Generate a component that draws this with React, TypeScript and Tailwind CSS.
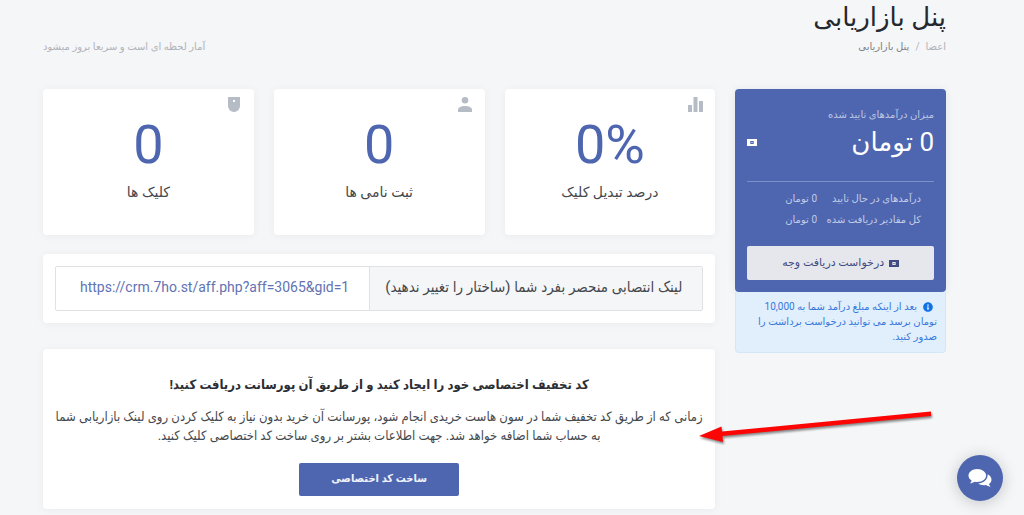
import type { ReactNode } from 'react';
import { FaInfoCircle } from 'react-icons/fa';

interface StatCardProps {
  value: string;
  label: string;
  icon: ReactNode;
}

function BarsIcon() {
  return (
    <svg viewBox="0 0 15 15" className="w-[15px] h-[15px]" fill="currentColor">
      <path d="M0 8h4v7H0zM5.5 0h4v15h-4zM11 4h4v11h-4z" />
    </svg>
  );
}

function PersonIcon() {
  return (
    <svg viewBox="0 0 14 15" className="w-[14px] h-[15px]" fill="currentColor">
      <circle cx="7" cy="3.3" r="3.3" />
      <path d="M0 15v-2.2C0 10.2 3.5 9 7 9s7 1.2 7 3.8V15z" />
    </svg>
  );
}

function MouseIcon() {
  return (
    <svg viewBox="0 0 12 15" className="w-[12px] h-[15px]" fill="currentColor">
      <path fillRule="evenodd" d="M0 0h12v9a6 6 0 0 1-12 0zM5 3v2h2V3z" />
    </svg>
  );
}

function CashIcon() {
  return (
    <svg viewBox="0 0 10 7" className="w-[10px] h-[7px]" fill="currentColor">
      <path fillRule="evenodd" d="M0 0h10v7H0zM3.3 2v3h3.4V2z" />
      <path d="M4.5 3h1v1h-1z" />
    </svg>
  );
}

function ChatIcon() {
  return (
    <svg viewBox="0 0 24 20" className="w-[24px] h-[20px]" fill="currentColor">
      <path d="M9.300 1C4.400 1 .5 3.900.5 7.600c0 2.100 1.200 3.900 3.200 5.100-.4 1-1 1.900-1.900 2.600 1.900-.1 3.500-.8 4.700-1.600.9.300 1.800.4 2.800.4 4.900 0 8.800-2.900 8.800-6.500S14.200 1 9.300 1z" />
      <path d="M19.600 6.200c.6 4.700-3.700 8.800-9.400 9.400 1.500 1 3.400 1.600 5.400 1.600.8 0 1.600-.1 2.300-.3 1.200.9 2.800 1.500 4.700 1.500-.8-.6-1.400-1.400-1.700-2.300 1.600-1.100 2.600-2.600 2.600-4.400 0-2.300-1.500-4.400-3.900-5.500z" />
    </svg>
  );
}

function StatCard({ value, label, icon }: StatCardProps) {
  return (
    <div className="relative bg-white rounded shadow-[0_1px_8px_rgba(0,0,0,0.05)] h-[146px] pt-7 text-center">
      <span className="absolute top-2 right-3 flex w-[15px] justify-center text-[#b6bcc6]">{icon}</span>
      <div dir="ltr" className="text-[54px] leading-[56px] text-[#4e66b0]">{value}</div>
      <div className="mt-2 text-[14px] leading-[22px] text-[#45484d]">{label}</div>
    </div>
  );
}

const stats: StatCardProps[] = [
  { value: '0%', label: 'درصد تبدیل کلیک', icon: <BarsIcon /> },
  { value: '0', label: 'ثبت نامی ها', icon: <PersonIcon /> },
  { value: '0', label: 'کلیک ها', icon: <MouseIcon /> },
];

const totals = [
  { label: 'درآمدهای در حال تایید', value: '0 تومان' },
  { label: 'کل مقادیر دریافت شده', value: '0 تومان' },
];

function EarningsPanel() {
  return (
    <aside>
      <div className="bg-[#4e66b0] rounded shadow-[0_1px_8px_rgba(0,0,0,0.08)] px-3 pt-[17px] pb-3">
        <div className="text-[10px] leading-[18px] text-[#bcc6e3]">میزان درآمدهای تایید شده</div>
        <div className="flex items-center justify-between text-white">
          <span className="text-[26px] leading-9">0 تومان</span>
          <CashIcon />
        </div>
        <div className="mt-[21px] border-t border-[#7e90c8] pt-[6px] pr-[13px]">
          {totals.map(total => (
            <div key={total.label} className="flex text-[10px] leading-[21px] text-[#c3cce7]">
              <span className="w-[95px] whitespace-nowrap">{total.label}</span>
              <span className="mr-[9px]">{total.value}</span>
            </div>
          ))}
        </div>
        <button className="mt-4 w-full h-[34px] flex items-center justify-center gap-[5px] rounded-xs bg-[#e6e7ec] text-[11px] text-[#3f4b80]">
          <CashIcon />
          درخواست دریافت وجه
        </button>
      </div>
      <div className="rounded-b border border-t-0 border-[#d5e6f9] bg-[#e1eefc] pt-[7px] pr-2 pb-2 text-[10px] leading-[15px] text-[#3579db] whitespace-nowrap">
        <div className="flex items-center gap-[6px] pr-1">
          <FaInfoCircle className="text-[#1273e6]" />
          <span>بعد از اینکه مبلغ درآمد شما به 10,000</span>
        </div>
        <div>تومان برسد می توانید درخواست برداشت را</div>
        <div>صدور کنید.</div>
      </div>
    </aside>
  );
}

export default function App() {
  return (
    <div
      dir="rtl"
      className="relative min-h-screen overflow-hidden bg-[#f5f6f8] pl-[43px] pr-[78px] pb-[6px] font-['Roboto','DejaVu_Sans',sans-serif]"
    >
      <header>
        <h1 className="mb-1 text-[26px] leading-[34px] text-[#24282f]">پنل بازاریابی</h1>
        <div className="flex items-center justify-between text-[10px] leading-[18px] text-[#b0b3b8]">
          <nav className="flex gap-[6px]">
            <a href="#members">اعضا</a>
            <span>/</span>
            <span className="text-[#7d8086]">پنل بازاریابی</span>
          </nav>
          <span>آمار لحظه ای است و سریعا بروز میشود</span>
        </div>
      </header>

      <div className="mt-[33px] grid grid-cols-4 gap-5 items-start">
        <EarningsPanel />

        <main className="col-span-3">
          <div className="grid grid-cols-3 gap-5">
            {stats.map(stat => (
              <StatCard key={stat.label} {...stat} />
            ))}
          </div>

          {/* Referral link */}
          <div className="mt-[19px] bg-white rounded shadow-[0_1px_8px_rgba(0,0,0,0.05)] p-3">
            <div className="flex h-[45px] border border-[#dfe1e5] rounded-xs">
              <label
                htmlFor="referral"
                className="flex items-center w-[333px] pr-5 pb-[3px] bg-[#f5f6f8] border-l border-[#dfe1e5] text-[15px] text-[#45484d] whitespace-nowrap font-['Roboto','DejaVu_Sans_Condensed','DejaVu_Sans',sans-serif]"
              >
                لینک انتصابی منحصر بفرد شما (ساختار را تغییر ندهید)
              </label>
              <input
                id="referral"
                dir="ltr"
                readOnly
                value="https://crm.7ho.st/aff.php?aff=3065&gid=1"
                className="min-w-0 flex-1 px-5 pb-[3px] text-right text-sm text-[#6273b3] outline-none"
              />
            </div>
          </div>

          {/* Discount code */}
          <section className="mt-[26px] h-[160px] bg-white rounded shadow-[0_1px_8px_rgba(0,0,0,0.05)] pt-6 text-center font-['Roboto','DejaVu_Sans_Condensed','DejaVu_Sans',sans-serif]">
            <h2 className="text-[13px] leading-6 font-bold text-[#2b2e34]">
              کد تخفیف اختصاصی خود را ایجاد کنید و از طریق آن پورسانت دریافت کنید!
            </h2>
            <p className="mt-[10px] text-[13px] leading-[19px] text-[#45484d] whitespace-nowrap">
              زمانی که از طریق کد تخفیف شما در سون هاست خریدی انجام شود، پورسانت آن خرید بدون نیاز به کلیک کردن روی لینک بازاریابی شما
              <br />
              به حساب شما اضافه خواهد شد. جهت اطلاعات بشتر بر روی ساخت کد اختصاصی کلیک کنید.
            </p>
            <button className="mt-[18px] w-[160px] h-[33px] rounded-xs bg-[#4e66b0] text-[11px] font-bold text-[#f0f2f9]">
              ساخت کد اختصاصی
            </button>
          </section>
        </main>
      </div>

      {/* Pointer arrow */}
      <svg
        viewBox="0 0 240 36"
        className="absolute right-[87px] top-[407px] w-[240px] h-[36px] drop-shadow-[1px_2px_1px_rgba(0,0,0,0.45)]"
        fill="#fb0505"
      >
        <path d="M234 4.500v4.500L25.500 29l.5 6L2 29l22.500-9.500.5 5z" />
      </svg>

      <button
        aria-label="گفتگو"
        className="absolute right-[21px] bottom-[14px] w-[46px] h-[46px] flex items-center justify-center rounded-full bg-[#4e66b0] text-white shadow-[0_2px_16px_rgba(0,0,0,0.2)]"
      >
        <ChatIcon />
      </button>
    </div>
  );
}
